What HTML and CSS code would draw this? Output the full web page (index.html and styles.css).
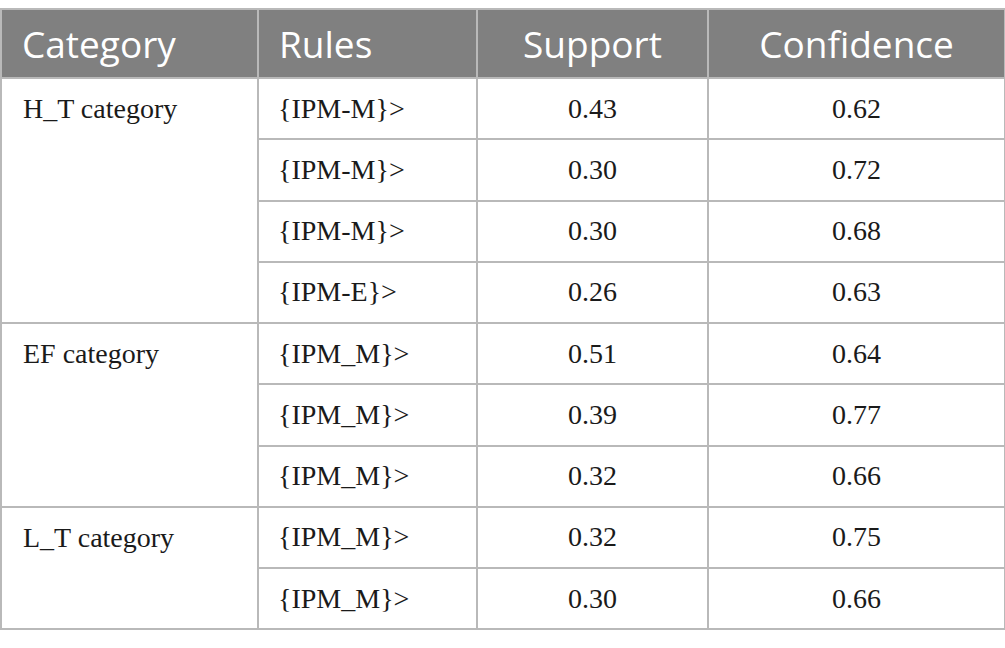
FILE: index.html
```html
<!DOCTYPE html>
<html>
<head>
<meta charset="utf-8">
<link rel="stylesheet" href="styles.css">
</head>
<body>
<div class="wrap">
<table class="rules">
  <colgroup>
    <col class="c1"><col class="c2"><col class="c3"><col class="c4">
  </colgroup>
  <thead>
    <tr><th class="left">Category</th><th class="left">Rules</th><th>Support</th><th>Confidence</th></tr>
  </thead>
  <tbody>
    <tr><td class="cat" rowspan="4">H_T category</td><td class="rule">{IPM-M}&gt;</td><td>0.43</td><td>0.62</td></tr>
    <tr><td class="rule">{IPM-M}&gt;</td><td>0.30</td><td>0.72</td></tr>
    <tr><td class="rule">{IPM-M}&gt;</td><td>0.30</td><td>0.68</td></tr>
    <tr><td class="rule">{IPM-E}&gt;</td><td>0.26</td><td>0.63</td></tr>
    <tr><td class="cat" rowspan="3">EF category</td><td class="rule">{IPM_M}&gt;</td><td>0.51</td><td>0.64</td></tr>
    <tr><td class="rule">{IPM_M}&gt;</td><td>0.39</td><td>0.77</td></tr>
    <tr><td class="rule">{IPM_M}&gt;</td><td>0.32</td><td>0.66</td></tr>
    <tr><td class="cat" rowspan="2">L_T category</td><td class="rule">{IPM_M}&gt;</td><td>0.32</td><td>0.75</td></tr>
    <tr><td class="rule">{IPM_M}&gt;</td><td>0.30</td><td>0.66</td></tr>
  </tbody>
</table>
</div>
</body>
</html>
```

FILE: styles.css
```css
html, body {
  margin: 0;
  padding: 0;
  background: #ffffff;
}
.wrap {
  padding-top: 8px;
}
.rules {
  border-collapse: collapse;
  table-layout: fixed;
  width: 1004px;
}
.c1 { width: 257px; }
.c2 { width: 219px; }
.c3 { width: 231px; }
.c4 { width: 297px; }
.rules th, .rules td {
  border: 2px solid #b9b9b9;
  padding: 0;
}
.rules th {
  background: #808080;
  color: #ffffff;
  font-family: "Open Sans", "Liberation Sans", sans-serif;
  font-weight: 400;
  font-size: 37px;
  height: 67px;
  text-align: center;
  vertical-align: middle;
}
.rules th.left {
  text-align: left;
  padding-left: 20px;
}
.rules td {
  font-family: "Liberation Serif", serif;
  font-size: 28px;
  color: #1a1a1a;
  height: 59.25px;
  text-align: center;
  vertical-align: middle;
}
.rules td.rule {
  text-align: left;
  padding-left: 19px;
}
.rules td.cat {
  text-align: left;
  vertical-align: top;
  padding-left: 21px;
  padding-top: 14px;
}
```
